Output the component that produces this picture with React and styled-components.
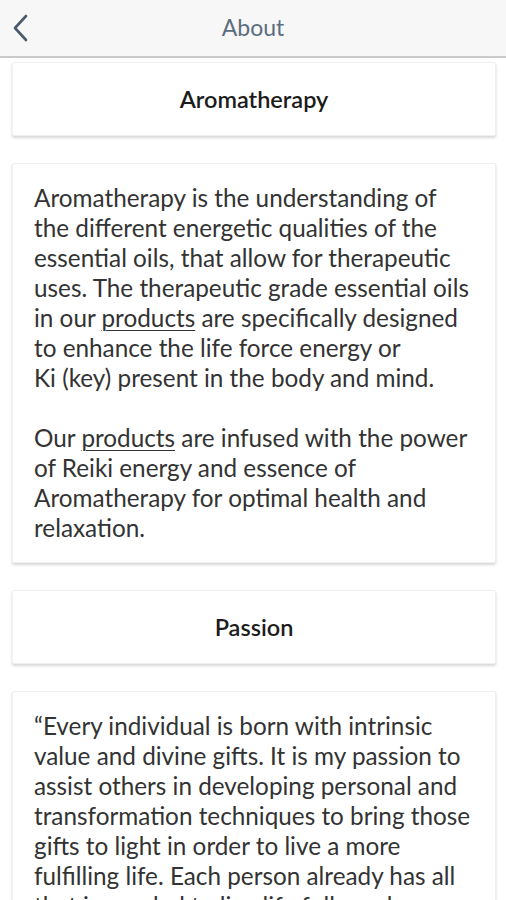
import styled, { createGlobalStyle } from 'styled-components';

const GlobalStyle = createGlobalStyle`
    html, body {
        margin: 0;
        padding: 0;
        background: #ffffff;
        font-family: Lato, "Open Sans", "Liberation Sans", sans-serif;
    }
`;

const Page = styled.div`
    width: 506px;
    height: 900px;
    overflow: hidden;
    background: #ffffff;
`;

const TopBar = styled.header`
    height: 56px;
    display: flex;
    align-items: center;
    justify-content: center;
    position: relative;
    background: #f7f7f7;
    border-bottom: 2px solid #c9cacc;
`;

const BackButton = styled.button`
    position: absolute;
    left: 5px;
    top: 12px;
    width: 32px;
    height: 32px;
    padding: 0;
    border: none;
    background: transparent;
    display: flex;
    align-items: center;
    justify-content: center;
`;

const Title = styled.h1`
    margin: 0 0 2px;
    font-size: 23px;
    font-weight: 400;
    color: #5d6d80;
`;

const Content = styled.main`
    display: flex;
    flex-direction: column;
    gap: 27px;
    padding: 4px 10px 0 12px;
`;

const Card = styled.section`
    background: #ffffff;
    border: 1px solid #f0f0f0;
    border-radius: 2px;
    box-shadow: 0 2px 3px rgba(0, 0, 0, 0.16);
`;

const Heading = styled(Card)`
    height: 72px;
    display: flex;
    align-items: center;
    justify-content: center;
    font-size: 23.5px;
    font-weight: 600;
    color: #1c1c1c;
`;

const Body = styled(Card)`
    padding: 19px 20px 19px 21px;
    font-size: 24.3px;
    line-height: 30px;
    color: #333333;

    p {
        margin: 0;
    }
    p + p {
        margin-top: 30px;
    }
`;

const Link = styled.a`
    color: inherit;
    text-decoration: underline;
    text-underline-offset: 3px;
    text-decoration-thickness: 1px;
`;

export default function App() {
    return (
        <Page>
            <GlobalStyle />
            <TopBar>
                <BackButton aria-label="Back">
                    <svg width="18" height="28" viewBox="0 0 18 28" fill="none">
                        <path d="M14 2 L3 14 L14 26" stroke="#4b5b6e" strokeWidth="2.6" strokeLinecap="round" strokeLinejoin="round" />
                    </svg>
                </BackButton>
                <Title>About</Title>
            </TopBar>
            <Content>
                <Heading>Aromatherapy</Heading>
                <Body>
                    <p>
                        Aromatherapy is the understanding of the different energetic qualities of the
                        essential oils, that allow for therapeutic uses. The therapeutic grade essential
                        oils in our <Link>products</Link> are specifically designed to enhance the life
                        force energy or<br />Ki (key) present in the body and mind.
                    </p>
                    <p>
                        Our <Link>products</Link> are infused with the power of Reiki energy and essence
                        of Aromatherapy for optimal health and relaxation.
                    </p>
                </Body>
                <Heading>Passion</Heading>
                <Body>
                    <p>
                        “Every individual is born with intrinsic value and divine gifts. It is my passion
                        to assist others in developing personal and transformation techniques to bring
                        those gifts to light in order to live a more fulfilling life. Each person already
                        has all that is needed to live life fully and joyfully.”
                    </p>
                </Body>
            </Content>
        </Page>
    );
}
